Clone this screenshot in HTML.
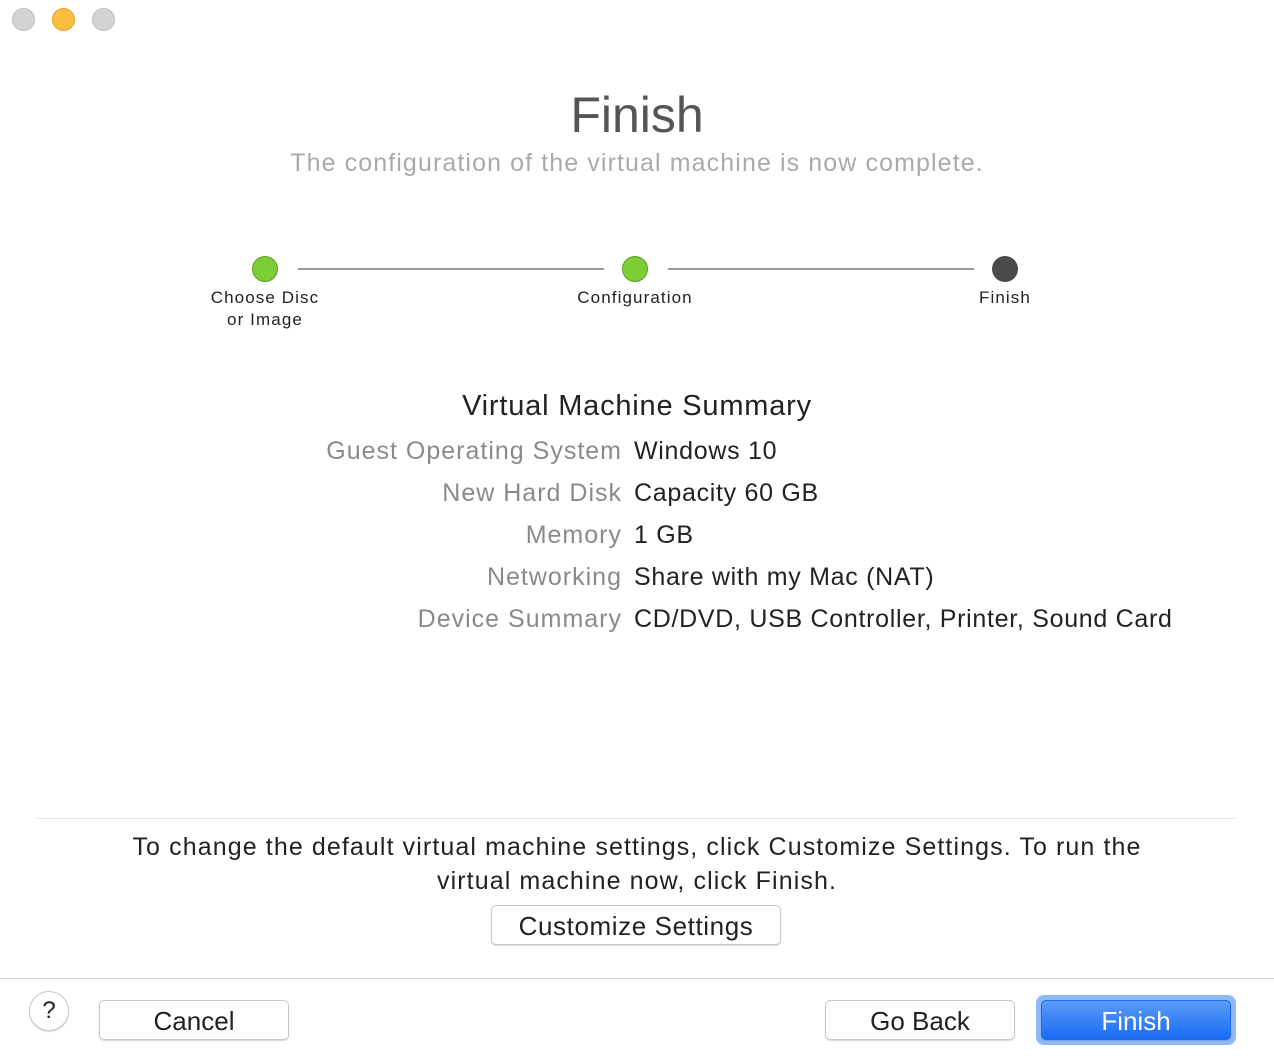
<!DOCTYPE html><html><head><style>
body{margin:0;width:1274px;height:1064px;background:#fff;font-family:"Liberation Sans",sans-serif;position:relative;overflow:hidden}
.a{position:absolute}
.tl{position:absolute;top:8px;width:23px;height:23px;border-radius:50%;background:#d3d3d3;border:1px solid #bdbdbd;box-sizing:border-box}
.c{text-align:center;left:0;width:1274px}
.dot{position:absolute;top:256px;width:26px;height:26px;border-radius:50%;box-sizing:border-box}
.g{background:#7ccd36;border:1px solid #5aa320}
.ln{position:absolute;top:268px;height:2px;background:#9a9a9a}
.lab{position:absolute;font-size:17px;color:#222;text-align:center;width:200px;line-height:22px;letter-spacing:1.1px}
.k{position:absolute;right:652px;font-size:25px;color:#8a8a8a;white-space:nowrap;letter-spacing:1px}
.v{position:absolute;left:634px;font-size:25px;color:#222;white-space:nowrap;letter-spacing:0.7px}
.btn{position:absolute;box-sizing:border-box;border:1px solid #c8c8c8;border-radius:5px;background:#fff;box-shadow:0 1px 1px rgba(0,0,0,.15);font-size:26px;color:#222;text-align:center}
</style></head><body>
<div class="tl" style="left:12px"></div>
<div class="tl" style="left:52px;background:#fdbd3e;border-color:#e0a22a"></div>
<div class="tl" style="left:92px"></div>
<div class="a c" style="top:86px;font-size:50px;color:#555">Finish</div>
<div class="a c" style="top:149px;font-size:25px;color:#aaa;letter-spacing:1.1px">The configuration of the virtual machine is now complete.</div>
<div class="dot g" style="left:252px"></div>
<div class="dot g" style="left:622px"></div>
<div class="dot" style="left:992px;background:#4a4a4a"></div>
<div class="ln" style="left:298px;width:306px"></div>
<div class="ln" style="left:668px;width:306px"></div>
<div class="lab" style="left:165px;top:287px">Choose Disc<br>or Image</div>
<div class="lab" style="left:535px;top:287px">Configuration</div>
<div class="lab" style="left:905px;top:287px">Finish</div>
<div class="a c" style="top:390px;font-size:29px;color:#222;letter-spacing:0.8px">Virtual Machine Summary</div>
<div class="k" style="top:437px">Guest Operating System</div><div class="v" style="top:437px">Windows 10</div>
<div class="k" style="top:479px">New Hard Disk</div><div class="v" style="top:479px">Capacity 60 GB</div>
<div class="k" style="top:521px">Memory</div><div class="v" style="top:521px">1 GB</div>
<div class="k" style="top:563px">Networking</div><div class="v" style="top:563px">Share with my Mac (NAT)</div>
<div class="k" style="top:605px">Device Summary</div><div class="v" style="top:605px">CD/DVD, USB Controller, Printer, Sound Card</div>
<div class="a" style="top:818px;left:36px;width:1200px;height:1px;background:#e6e6e6"></div>
<div class="a c" style="top:830px;font-size:25px;color:#222;line-height:34px;letter-spacing:1.1px">To change the default virtual machine settings, click Customize Settings. To run the<br>virtual machine now, click Finish.</div>
<div class="btn" style="left:491px;top:905px;width:290px;height:40px;line-height:40px;letter-spacing:0.6px">Customize Settings</div>
<div class="a" style="top:978px;left:0;width:1274px;height:1px;background:#cfcfcf"></div>
<div class="btn" style="left:29px;top:991px;width:40px;height:40px;border-radius:50%;line-height:38px;font-size:24px">?</div>
<div class="btn" style="left:99px;top:1000px;width:190px;height:40px;line-height:40px">Cancel</div>
<div class="btn" style="left:825px;top:1000px;width:190px;height:40px;line-height:40px">Go Back</div>
<div class="a" style="left:1036px;top:995px;width:200px;height:50px;border-radius:8px;background:#8fb8f7"></div>
<div class="btn" style="left:1041px;top:1000px;width:190px;height:40px;line-height:40px;border:1px solid #1f6ae6;background:linear-gradient(#5a9bf8,#1a6cf5);color:#fff">Finish</div>
</body></html>
